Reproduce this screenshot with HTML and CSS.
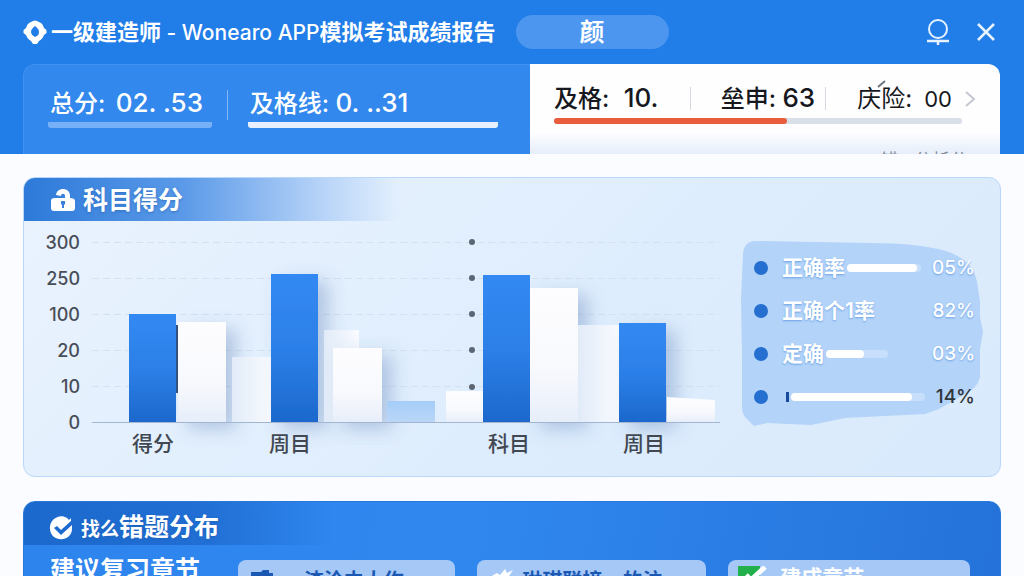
FILE: index.html
```html
<!DOCTYPE html>
<html lang="zh-CN">
<head>
<meta charset="utf-8">
<meta name="viewport" content="width=device-width, initial-scale=1">
<title>一级建造师 APP模拟考试成绩报告</title>
<link rel="stylesheet" href="styles.css">
</head>
<body>
<header class="header">
  <div class="topbar">
    <svg class="logo" viewBox="0 0 24 24" width="24" height="24" aria-hidden="true"><path fill="#fff" fill-rule="evenodd" d="M8 2Q12-1 16 2C19 3 20 5 21 8l2.500 2v3L21 15c-1 3-3 5-5 6l-2 3h-4l-2-3c-2-1-4-3-5-6L.5 13v-3L3 8c1-3 2-5 5-6ZM12 6c-2 2-4 3-4 6 0 2 2 4 4 5 3-1 4-3 4-5 0-3-2-4-4-6Z"/></svg>
    <h1 class="title">一级建造师 <span class="latin">- Wonearo APP</span>模拟考试成绩报告</h1>
    <button class="pill" type="button">颜</button>
    <div class="actions">
      <button class="icon-button" type="button" aria-label="账户"><svg viewBox="0 0 24 28" width="24" height="28"><g fill="none" stroke="#e6f2ff" stroke-width="2"><circle cx="12" cy="11" r="9"/><path d="M1 23h22M12 23v4" stroke-width="2.500"/></g></svg></button>
      <button class="icon-button" type="button" aria-label="关闭"><svg viewBox="0 0 20 20" width="20" height="20"><path d="m2 2 16 16M18 2 2 18" fill="none" stroke="#e6f2ff" stroke-width="2.500"/></svg></button>
    </div>
  </div>
  <div class="summary">
    <section class="scores">
      <div class="score score-total"><span>总分: <b>02. .53</b></span></div>
      <div class="score score-pass"><span>及格线: <b>0. ..31</b></span></div>
    </section>
    <section class="results">
      <div class="result-row">
        <span class="result">及格: <b>10.</b></span>
        <span class="result">垒申: <b>63</b></span>
        <a class="result result-link" href="#chart">庆险: <b>00</b>
          <svg class="accent" viewBox="0 0 10 8" width="10" height="8" aria-hidden="true"><path d="M1 7 8 1" stroke="#6d747d" stroke-width="2"/></svg>
          <svg viewBox="0 0 12 18" width="12" height="18" aria-hidden="true"><path d="m2 2 8 7-8 7" fill="none" stroke="#c3c8d0" stroke-width="2"/></svg></a>
      </div>
      <div class="track"><div class="track-fill" style="width:57%"></div></div>
      <p class="more">错 . 分析分</p>
    </section>
  </div>
</header>
<main class="content">
  <section class="panel" id="chart">
    <h2 class="panel-title"><svg viewBox="0 0 24 24" width="24" height="24" aria-hidden="true"><path fill="#fff" fill-rule="evenodd" d="M5 7c1-8 13-8 14 0v3c3 0 5 1 5 3v7c0 2-1 3-3 3H3c-2 0-3-1-3-3v-7c0-2 1-3 4-3h10V8c0-3-4-3-4 0ZM10 13v3l1 1v3h2v-3l1-1v-3Z"/></svg>科目得分</h2>
    <div class="panel-body">
      <svg class="chart" viewBox="40 221 690 243" role="img" aria-label="科目得分">
        <defs>
          <linearGradient id="blue" x2="0" y2="1"><stop stop-color="#3389f2"/><stop offset=".5" stop-color="#2c80e8"/><stop offset="1" stop-color="#1c68cd"/></linearGradient>
          <linearGradient id="white" x2="0" y2="1"><stop stop-color="#fdfdff"/><stop offset=".6" stop-color="#f8f9fd"/><stop offset="1" stop-color="#e7eefa"/></linearGradient>
          <linearGradient id="pale" x2="1" y2="0"><stop stop-color="#e1ebf8"/><stop offset="1" stop-color="#f9fbff"/></linearGradient>
          <linearGradient id="light" x2="0" y2="1"><stop stop-color="#a5cdf9"/><stop offset="1" stop-color="#bad6f6"/></linearGradient>
          <filter id="shade" x="-40%" y="-20%" width="200%" height="150%"><feDropShadow dx="10" dy="7" stdDeviation="9" flood-color="#426ca8" flood-opacity=".32"/></filter>
        </defs>
        <path class="grid-lines" d="M92 242.500H720M92 278.500H720M92 314.500H720M92 350.500H720M92 386.500H720"/>
        <g class="y-labels"><text x="80" y="249">300</text><text x="80" y="285">250</text><text x="80" y="321">100</text><text x="80" y="357">20</text><text x="80" y="393">10</text><text x="80" y="429">0</text></g>
        <g fill="#5b6672"><circle cx="472" cy="242" r="3"/><circle cx="472" cy="278" r="3"/><circle cx="472" cy="314" r="3"/><circle cx="472" cy="350" r="3"/><circle cx="472" cy="387" r="3"/></g>
        <g filter="url(#shade)"><rect x="178" y="322" width="48" height="100" fill="url(#white)"/></g>
        <rect x="232" y="357" width="39" height="65" fill="url(#pale)"/>
        <rect x="176" y="325" width="2" height="68" fill="#31527f"/>
        <rect x="129" y="314" width="47" height="108" fill="url(#blue)"/>
        <g filter="url(#shade)"><rect x="271" y="274" width="47" height="148" fill="url(#blue)"/></g>
        <rect x="324" y="330" width="35" height="92" fill="url(#pale)"/>
        <g filter="url(#shade)"><rect x="333" y="348" width="49" height="74" fill="url(#white)"/></g>
        <rect x="387" y="401" width="48" height="21" fill="url(#light)"/>
        <rect x="446" y="391" width="37" height="31" fill="url(#white)"/>
        <g filter="url(#shade)"><rect x="530" y="288" width="48" height="134" fill="url(#white)"/></g>
        <rect x="483" y="275" width="47" height="147" fill="url(#blue)"/>
        <rect x="578" y="325" width="41" height="97" fill="url(#pale)"/>
        <g filter="url(#shade)"><rect x="619" y="323" width="47" height="99" fill="url(#blue)"/></g>
        <path d="M667 397 715 400V422H667Z" fill="url(#white)"/>
        <path d="M92 422.500H720" stroke="#a3b5d0"/>
        <g class="x-labels"><text x="153" y="451">得分</text><text x="290" y="451">周目</text><text x="509" y="451">科目</text><text x="644" y="451">周目</text></g>
      </svg>
      <div class="legend">
        <svg class="legend-shape" viewBox="0 0 243 188" preserveAspectRatio="none" aria-hidden="true"><path fill="#b3d3f9" d="M2 14Q3 1 15 1L130 3Q175 3 205 11Q232 20 236 42L239 62V78L242 92L239 110V138Q236 150 222 156L198 170L184 175L104 179L70 186L26 184L13 187L6 180Q1 176 1 168V115L0 60Z"/></svg>
        <ul class="legend-list">
          <li><i class="dot"></i><span class="label">正确率</span><span class="bar bar-long"><i style="width:94%"></i></span><b>05%</b></li>
          <li><i class="dot"></i><span class="label">正确个1率</span><b>82%</b></li>
          <li><i class="dot"></i><span class="label">定确</span><span class="bar bar-short"><i style="width:62%"></i></span><b>03%</b></li>
          <li><i class="dot"></i><i class="tick"></i><span class="bar bar-full"><i style="width:90%"></i></span><b class="dark">14%</b></li>
        </ul>
      </div>
    </div>
  </section>
  <section class="panel mistakes">
    <h2 class="panel-title"><svg viewBox="0 0 24 24" width="24" height="24" aria-hidden="true"><path fill="#fff" d="M18 2C10-3 0 4 1 13c1 14 22 13 22 0V9L12 19l-7-7 3-2 4 4L22 5v-3l-2 2Z"/></svg><span><span class="small">找么</span>错题分布</span></h2>
    <div class="chapters">
      <h3 class="chapters-title">建议复习章节</h3>
      <a class="chapter" href="#c1"><svg viewBox="0 0 24 24" width="24" height="24" aria-hidden="true"><path fill="#1b58b4" d="M1 3h10l2-2h6v3h4v5l-3 3v9H5v-9H1Z"/></svg><span>渣洽中大作</span></a>
      <a class="chapter" href="#c2"><svg viewBox="0 0 24 24" width="24" height="24" aria-hidden="true"><path fill="#fff" d="m1 8 7-4 3 2 5-6 2 4 6-3-4 6 3 2-5 2v11H3V11Z"/></svg><span>琳琪联接、的注</span></a>
      <a class="chapter chapter-done" href="#c3"><svg viewBox="0 0 30 24" width="30" height="24" aria-hidden="true"><path fill="#21b04b" d="M0 0h22v24H0Z"/><path fill="none" stroke="#fff" stroke-width="5" d="m8 9 5 5L27 1"/></svg><span>建成章节</span></a>
    </div>
  </section>
</main>
</body>
</html>
```
FILE: styles.css
```css
* { box-sizing: border-box; }
html { scrollbar-width: none; }
body {
  margin: 0;
  background: #fbfcff;
  color: #fff;
  font-family: Inter, "Noto Sans CJK SC", sans-serif;
}
h1, h2, h3, p, ul { margin: 0; padding: 0; }
button { border: 0; font: inherit; color: inherit; cursor: pointer; }
a { color: inherit; text-decoration: none; }
svg { display: block; flex: none; }

.header {
  padding: 0 24px 0 23px;
  background: #217de8;
}
.topbar {
  display: flex;
  align-items: center;
  height: 64px;
  padding-right: 4px;
}
.logo { margin-right: 4px; }
.title {
  font-size: 22px;
  font-weight: 600;
  line-height: 32px;
  white-space: nowrap;
}
.latin { font-size: 21px; font-weight: 500; }
.pill {
  width: 153px;
  height: 34px;
  margin-left: 20px;
  border-radius: 17px;
  background: #4c96ef;
  font-size: 25px;
  font-weight: 600;
  line-height: 32px;
  padding: 0;
}
.actions {
  display: flex;
  align-items: center;
  gap: 26px;
  margin-left: auto;
}
.icon-button { padding: 0; background: none; }

.summary {
  display: grid;
  grid-template-columns: 507fr 470fr;
}
.scores {
  display: flex;
  gap: 36px;
  padding: 21px 32px 26px 24px;
  border: 1px solid #4091f0;
  border-width: 1px 0 0 1px;
  border-radius: 12px 0 0 0;
  background: #3388ed;
  font-size: 24px;
  font-weight: 500;
}
.score {
  position: relative;
  padding-left: 2px;
  border-bottom: 6px solid #76b0f6;
  border-radius: 3px;
  line-height: 34px;
  white-space: nowrap;
}
.score b, .result b { font-size: 26px; font-weight: 500; }
.score-total { flex: 163; }
.score-total b { margin-left: 4px; }
.score-pass { flex: 250; border-color: #e6f0ff; }
.score-total::after {
  content: "";
  position: absolute;
  top: 4px;
  right: -16px;
  width: 1px;
  height: 30px;
  background: #83b7f6;
}
.results {
  padding: 15px 24px 0 24px;
  border-radius: 0 12px 0 0;
  background: linear-gradient(#fefeff 75%, #e6eefa);
  color: #16181d;
  font-size: 24px;
}
.result-row {
  display: flex;
  align-items: center;
  justify-content: space-between;
}
.result {
  line-height: 38px;
  white-space: nowrap;
  font-weight: 500;
}
.result:first-child b { margin-left: 8px; }
.result:nth-child(2) {
  padding: 0 10px 0 30px;
  border: 1px solid #d5d9e2;
  border-width: 0 1px;
  line-height: 22px;
}
.result-link {
  position: relative;
  display: flex;
  align-items: center;
  gap: 12px;
  font-weight: 400;
}
.result-link b { font-size: 22px; font-weight: 400; }
.accent { position: absolute; top: 0; left: 20px; }
.track {
  height: 6px;
  margin-right: 14px;
  border-radius: 3px;
  background: #d9dfe7;
}
.track-fill { height: 100%; border-radius: 3px; background: #e95d3c; }
.more {
  height: 4px;
  margin-top: 26px;
  padding-right: 8px;
  overflow: hidden;
  color: #858d9a;
  font-size: 18px;
  line-height: 22px;
  text-align: right;
}

.content {
  display: grid;
  gap: 24px;
  padding: 23px;
}
.panel {
  overflow: hidden;
  border: 1px solid #b9d7fa;
  border-radius: 12px;
  background: linear-gradient(135deg, #eaf3fe, #deedfd 55%, #d9eafc);
}
.panel-title {
  display: flex;
  align-items: center;
  gap: 8px;
  height: 43px;
  padding: 0 27px;
  background: linear-gradient(90deg, #2d7ad9, #5b9ae8 160px, #b8d4f8 300px, #d0e3fb00 376px);
  font-size: 25px;
  font-weight: 600;
  line-height: 40px;
  text-shadow: 0 1px 3px #1c5cae99;
}
.panel-body {
  display: grid;
  grid-template-columns: 690fr 243fr;
  align-items: start;
  gap: 11px;
  padding: 0 16px 12px 16px;
}
.chart { width: 100%; height: auto; }
.grid-lines { stroke: #d3e1f0; stroke-dasharray: 7 4; }
.y-labels { font-size: 18px; font-weight: 500; fill: #484e57; text-anchor: end; }
.x-labels { font-size: 21px; font-weight: 500; fill: #414852; text-anchor: middle; }

.legend {
  position: relative;
  margin-top: 19px;
  padding: 6px 9px 9px 13px;
}
.legend-shape { position: absolute; inset: 0; width: 100%; height: 100%; }
.legend-list { position: relative; list-style: none; font-size: 21px; font-weight: 600; }
.legend-list li { display: flex; align-items: center; height: 43px; }
.legend-list b { margin-left: auto; font-size: 19px; font-weight: 500; }
.legend-list .dark { color: #30343b; }
.label { line-height: 24px; white-space: nowrap; text-shadow: 0 1px 2px #6ba2e4; }
.legend-list b:not(.dark) { text-shadow: 0 1px 2px #6ba2e4; }
.dot { width: 14px; height: 14px; margin-right: 14px; border-radius: 50%; background: #246fcf; }
.bar { height: 8px; margin-left: 2px; border-radius: 4px; background: #c8dffb; }
.bar i { display: block; height: 100%; border-radius: 4px; background: #fff; }
.bar-long { flex: 0 1 74px; }
.bar-short { flex: 0 1 62px; }
.bar-full { flex: 0 1 134px; }
.tick { width: 3px; height: 10px; margin-left: 4px; background: #174a9c; }

.mistakes {
  border-color: #2878dc;
  background: linear-gradient(100deg, #2d84ed, #3088ef 45%, #2472d9);
}
.mistakes .panel-title {
  padding: 9px 25px 0;
  background: linear-gradient(90deg, #1c69cd, #216fd4 180px, #2d82ea00 310px);
}
.small { font-size: 19px; }
.chapters {
  display: grid;
  grid-template-columns: 166fr 217fr 230fr 242fr;
  gap: 22px;
  padding: 0 30px 28px 26px;
}
.chapters-title {
  font-size: 25px;
  font-weight: 600;
  line-height: 50px;
  white-space: nowrap;
}
.chapter {
  display: flex;
  align-items: center;
  gap: 30px;
  height: 42px;
  margin-top: 15px;
  padding: 0 12px;
  border-radius: 8px;
  background: #a5c8f7;
  color: #1b58b4;
  font-size: 20px;
  font-weight: 600;
  line-height: 30px;
  white-space: nowrap;
}
.chapter:nth-child(3) { gap: 10px; }
.chapter-done { gap: 12px; height: 36px; padding-left: 10px; color: #fff; font-size: 21px; }
```
